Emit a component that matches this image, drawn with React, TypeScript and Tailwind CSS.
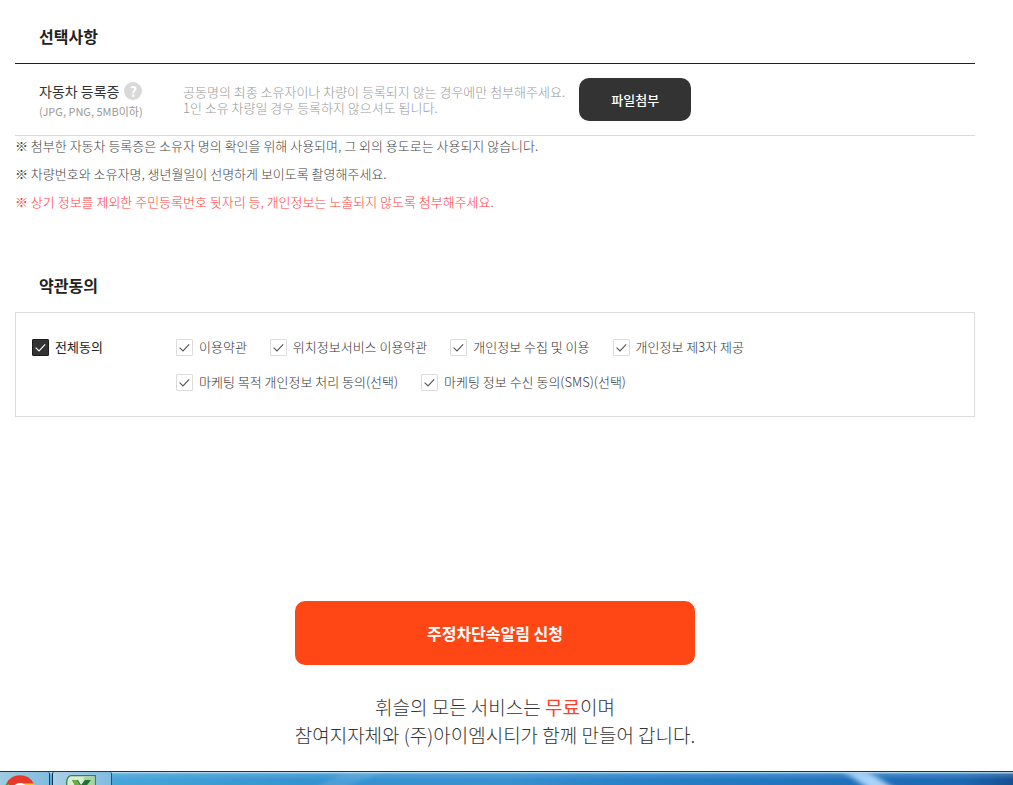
import { useState } from "react";
import type { ReactNode } from "react";

const terms = [
  ["이용약관", "위치정보서비스 이용약관", "개인정보 수집 및 이용", "개인정보 제3자 제공"],
  ["마케팅 목적 개인정보 처리 동의(선택)", "마케팅 정보 수신 동의(SMS)(선택)"],
];
const allTerms = terms.flat();

type CheckProps = {
  checked: boolean;
  onChange: () => void;
  dark?: boolean;
  children: ReactNode;
};

function Check({ checked, onChange, dark = false, children }: CheckProps) {
  return (
    <label className="flex cursor-pointer items-center gap-1.5">
      <span className="grid size-[17px] shrink-0">
        <input
          type="checkbox"
          checked={checked}
          onChange={onChange}
          className={
            dark
              ? "col-start-1 row-start-1 size-[17px] appearance-none rounded-[1px] border border-[#1d1d1d] bg-[#333]"
              : "col-start-1 row-start-1 size-[17px] appearance-none rounded-[1px] border border-[#dcdcdc] bg-white"
          }
        />
        {checked && (
          <svg
            viewBox="0 0 17 17"
            aria-hidden="true"
            className={
              dark
                ? "pointer-events-none col-start-1 row-start-1 size-[17px] text-white"
                : "pointer-events-none col-start-1 row-start-1 size-[17px] text-[#555]"
            }
          >
            <path d="M3.6 8.6 7 12 13.2 5.4" fill="none" stroke="currentColor" strokeWidth="1.1" />
          </svg>
        )}
      </span>
      <span>{children}</span>
    </label>
  );
}

function Taskbar() {
  return (
    <footer className="grid h-[14px] overflow-hidden border-t border-[#1c3a50]">
      <svg
        viewBox="0 0 1013 13"
        preserveAspectRatio="none"
        aria-hidden="true"
        className="col-start-1 row-start-1 h-[13px] w-full"
      >
        <defs>
          <linearGradient id="bar">
            <stop offset="0" stopColor="#5fb0dc" />
            <stop offset="0.12" stopColor="#46a5d8" />
            <stop offset="0.3" stopColor="#3593d0" />
            <stop offset="0.5" stopColor="#3a91d0" />
            <stop offset="0.6" stopColor="#2a83c8" />
            <stop offset="0.75" stopColor="#2177c0" />
            <stop offset="0.95" stopColor="#1d68b2" />
            <stop offset="1" stopColor="#174f93" />
          </linearGradient>
          <linearGradient id="shine" x2="0" y2="1">
            <stop offset="0" stopColor="#c5e4f7" />
            <stop offset="0.1" stopColor="#9fcdec" stopOpacity="0.7" />
            <stop offset="0.2" stopColor="#8bc0e5" stopOpacity="0.3" />
            <stop offset="0.6" stopColor="#8bc0e5" stopOpacity="0" />
          </linearGradient>
          <filter id="soft" x="-50%" y="-50%" width="200%" height="200%">
            <feGaussianBlur stdDeviation="4 1" />
          </filter>
        </defs>
        <rect width="1013" height="13" fill="url(#bar)" />
        <path d="M842 -2h24l26 17h-26z" fill="#a9d3f8" filter="url(#soft)" />
        <path d="M350 -2h36l-40 17h-30z" fill="#6db4e0" opacity="0.4" filter="url(#soft)" />
        <rect width="1013" height="13" fill="url(#shine)" />
      </svg>
      <div className="col-start-1 row-start-1 flex gap-[2px]">
        <button
          type="button"
          aria-label="Chrome"
          className="flex h-[20px] w-[50px] items-start justify-start overflow-hidden rounded-tr-[2px] border-r border-[#17405f] bg-linear-to-r from-[#9fcbe3] to-[#82bcdd] pl-[4px]"
        >
          <svg viewBox="0 0 32 32" className="mt-[3px] size-[32px] shrink-0" aria-hidden="true">
            <circle cx="16" cy="16" r="15.5" fill="#fbc916" />
            <path d="M16 16 2.4 8.3A15.6 15.6 0 0 1 29.8 8.5H16z" fill="#e5392b" />
            <path d="M2.4 8.3A15.5 15.5 0 0 0 15 31.5L20 20z" fill="#2f9e49" />
            <circle cx="16" cy="16" r="8" fill="#fff" />
            <circle cx="16" cy="16" r="6" fill="#3c79dc" />
          </svg>
        </button>
        <button
          type="button"
          aria-label="Excel"
          className="flex h-[20px] w-[60px] items-start justify-start overflow-hidden rounded-t-[2px] border-x border-[#24516e] border-l-[#102f46] bg-linear-to-r from-[#a9d0e5] to-[#80bce0] pl-[12px]"
        >
          <svg viewBox="0 0 32 30" className="mt-[3px] h-[30px] w-[32px] shrink-0" aria-hidden="true">
            <path d="M6 .7h24.3V29H1.7V7Q2 1.5 6 .7Z" fill="#d9edcf" stroke="#33834a" strokeWidth="1.3" />
            <path d="M19 2h10v26H16z" fill="#a8d69a" />
            <path d="M7 5h6l3 5 4-5h6l-7 9 7 11h-7l-4-6-5 6H4l8-11z" fill="#256e3c" />
            <path d="M7 5h5l12 20h-5z" fill="#69ac45" />
          </svg>
        </button>
      </div>
    </footer>
  );
}

export default function App() {
  const [agreed, setAgreed] = useState<string[]>(allTerms);
  const all = agreed.length === allTerms.length;
  const toggle = (term: string) =>
    setAgreed((now) => (now.includes(term) ? now.filter((t) => t !== term) : [...now, term]));

  return (
    <div className="flex min-h-screen flex-col bg-white font-['Noto_Sans_CJK_KR',sans-serif] text-[#222]">
      <main className="flex grow flex-col pr-[38px] pl-[15px]">
        <section>
          <h2 className="border-b border-[#222] px-6 pt-6 pb-[15px] text-base leading-6 font-bold">
            선택사항
          </h2>
          <div className="flex border-b border-[#d9d9d9] pt-[14px] pb-[14px] pl-6">
            <div className="w-36 shrink-0">
              <div className="flex items-center gap-[5px] text-sm leading-[26px] text-[#333]">
                자동차 등록증
                <button
                  type="button"
                  aria-label="도움말"
                  className="flex size-[18px] items-center justify-center rounded-full bg-[#d9d9d9] text-sm leading-none font-bold text-white"
                >
                  ?
                </button>
              </div>
              <p className="text-[11px] leading-[14px] text-[#999]">(JPG, PNG, 5MB이하)</p>
            </div>
            <p className="pt-[6px] text-[13px] leading-4 font-light text-[#999]">
              공동명의 최종 소유자이나 차량이 등록되지 않는 경우에만 첨부해주세요.
              <br />
              1인 소유 차량일 경우 등록하지 않으셔도 됩니다.
            </p>
            <button
              type="button"
              className="ml-[14px] h-[43px] w-28 shrink-0 rounded-[10px] bg-[#333] text-[13px] font-medium text-white"
            >
              파일첨부
            </button>
          </div>
          <ul className="flex flex-col gap-2 text-[13px] leading-5 font-light text-[#444]">
            <li>※ 첨부한 자동차 등록증은 소유자 명의 확인을 위해 사용되며, 그 외의 용도로는 사용되지 않습니다.</li>
            <li>※ 차량번호와 소유자명, 생년월일이 선명하게 보이도록 촬영해주세요.</li>
            <li className="text-[#ff4040]">
              ※ 상기 정보를 제외한 주민등록번호 뒷자리 등, 개인정보는 노출되지 않도록 첨부해주세요.
            </li>
          </ul>
        </section>

        <section className="mt-[61px]">
          <h2 className="px-6 pb-[15px] text-base leading-6 font-bold">약관동의</h2>
          <div className="flex border border-[#dcdcdc] px-4 pt-[23px] pb-[23px] text-[13px] leading-[22px]">
            <div className="w-36 shrink-0">
              <Check dark checked={all} onChange={() => setAgreed(all ? [] : allTerms)}>
                전체동의
              </Check>
            </div>
            <div className="flex flex-col gap-[13px] font-light text-[#333]">
              {terms.map((row) => (
                <div key={row[0]} className="flex flex-wrap gap-x-[23px]">
                  {row.map((term) => (
                    <Check key={term} checked={agreed.includes(term)} onChange={() => toggle(term)}>
                      {term}
                    </Check>
                  ))}
                </div>
              ))}
            </div>
          </div>
        </section>

        <section className="mt-46 flex flex-col items-center">
          <button
            type="submit"
            className="h-16 w-full max-w-[400px] rounded-[10px] bg-[#ff4716] text-base font-bold text-white"
          >
            주정차단속알림 신청
          </button>
          <p className="mt-7 text-center text-[19px] leading-7 font-light text-[#333]">
            휘슬의 모든 서비스는 <strong className="font-normal text-[#ff4028]">무료</strong>이며
            <br />
            참여지자체와 (주)아이엠시티가 함께 만들어 갑니다.
          </p>
        </section>
      </main>
      <Taskbar />
    </div>
  );
}
